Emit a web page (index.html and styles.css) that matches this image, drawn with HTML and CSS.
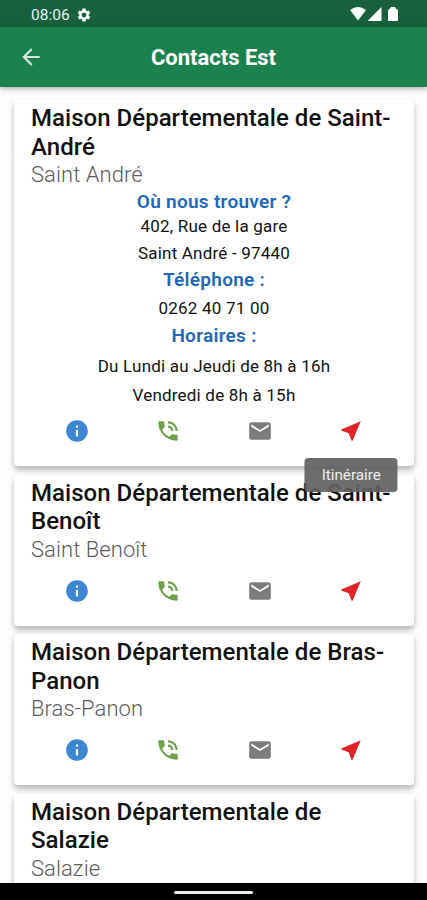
FILE: index.html
```html
<!DOCTYPE html>
<html lang="fr">
<head>
    <meta charset="UTF-8">
    <meta name="viewport" content="width=device-width, initial-scale=1.0">
    <title>Contacts Est</title>
    <link rel="stylesheet" href="styles.css">
</head>
<body>
    <!-- Icônes communes -->
    <svg class="sprite" width="0" height="0">
        <symbol id="info" viewBox="0 0 24 24"><path d="M12 2C6.48 2 2 6.48 2 12s4.48 10 10 10 10-4.48 10-10S17.52 2 12 2zm1 15h-2v-6h2v6zm0-8h-2V7h2v2z"/></symbol>
        <symbol id="phone" viewBox="0 0 24 24"><path d="M20 15.5c-1.25 0-2.45-.2-3.57-.57-.1-.03-.21-.05-.31-.05-.26 0-.51.1-.71.29l-2.2 2.2c-2.83-1.44-5.15-3.75-6.59-6.58l2.2-2.21c.28-.27.36-.66.25-1.01C8.7 6.45 8.5 5.25 8.5 4c0-.55-.45-1-1-1H4c-.55 0-1 .45-1 1 0 9.39 7.61 17 17 17 .55 0 1-.45 1-1v-3.5c0-.55-.45-1-1-1zM19 12h2c0-4.97-4.03-9-9-9v2c3.87 0 7 3.13 7 7zm-4 0h2c0-2.76-2.24-5-5-5v2c1.66 0 3 1.34 3 3z"/></symbol>
        <symbol id="mail" viewBox="0 0 24 24"><path d="M20 4H4c-1.1 0-1.99.9-1.99 2L2 18c0 1.1.9 2 2 2h16c1.1 0 2-.9 2-2V6c0-1.1-.9-2-2-2zm0 4l-8 5-8-5V6l8 5 8-5v2z"/></symbol>
        <symbol id="near" viewBox="0 0 24 24"><path d="M21 3L3 10.53v.98l6.84 2.65L12.48 21h.98L21 3z"/></symbol>
    </svg>

    <div class="screen">
        <header class="status-bar">
            <span class="time">08:06</span>
            <svg class="gear" viewBox="0 0 24 24"><path d="M19.14 12.94c.04-.3.06-.61.06-.94 0-.32-.02-.64-.07-.94l2.03-1.58c.18-.14.23-.41.12-.61l-1.92-3.32c-.12-.22-.37-.29-.59-.22l-2.39.96c-.5-.38-1.03-.7-1.62-.94l-.36-2.54c-.04-.24-.24-.41-.48-.41h-3.84c-.24 0-.43.17-.47.41l-.36 2.54c-.59.24-1.13.57-1.62.94l-2.39-.96c-.22-.08-.47 0-.59.22L2.74 8.87c-.12.21-.08.47.12.61l2.03 1.58c-.05.3-.09.63-.09.94s.02.64.07.94l-2.03 1.58c-.18.14-.23.41-.12.61l1.92 3.32c.12.22.37.29.59.22l2.39-.96c.5.38 1.03.7 1.62.94l.36 2.54c.05.24.24.41.48.41h3.84c.24 0 .44-.17.47-.41l.36-2.54c.59-.24 1.13-.56 1.62-.94l2.39.96c.22.08.47 0 .59-.22l1.92-3.32c.12-.22.07-.47-.12-.61l-2.01-1.58zM12 15.6c-1.98 0-3.6-1.62-3.6-3.6s1.62-3.6 3.6-3.6 3.6 1.62 3.6 3.6-1.62 3.6-3.6 3.6z"/></svg>
            <svg class="signals" viewBox="0 0 50 16">
                <path d="M0 4Q8-2 16 4L8 14.500zM17.500 15L31.500 1v14zM38 5q0-2 2-2.300L41 1h4l1 1.700q2 .3 2 2.300V14q0 1-1 1h-8q-1 0-1-1z"/>
            </svg>
        </header>

        <nav class="app-bar">
            <svg class="back" viewBox="0 0 24 24"><path d="M20 11H7.83l5.59-5.59L12 4l-8 8 8 8 1.41-1.41L7.83 13H20v-2z"/></svg>
            <h1>Contacts Est</h1>
        </nav>

        <main class="list">
            <section class="card">
                <h2>Maison Départementale de Saint-<br>André</h2>
                <p class="city">Saint André</p>
                <div class="details">
                    <h3>Où nous trouver ?</h3>
                    <p class="address">402, Rue de la gare<br>Saint André - 97440</p>
                    <h3>Téléphone :</h3>
                    <p class="number">0262 40 71 00</p>
                    <h3>Horaires :</h3>
                    <p class="hours">Du Lundi au Jeudi de 8h à 16h<br>Vendredi de 8h à 15h</p>
                </div>
                <div class="actions">
                    <svg class="info"><use href="#info"/></svg>
                    <svg class="phone"><use href="#phone"/></svg>
                    <svg class="mail"><use href="#mail"/></svg>
                    <div class="route">
                        <svg class="near"><use href="#near"/></svg>
                        <span class="tooltip">Itinéraire</span>
                    </div>
                </div>
            </section>

            <section class="card">
                <h2>Maison Départementale de Saint-<br>Benoît</h2>
                <p class="city">Saint Benoît</p>
                <div class="actions">
                    <svg class="info"><use href="#info"/></svg>
                    <svg class="phone"><use href="#phone"/></svg>
                    <svg class="mail"><use href="#mail"/></svg>
                    <svg class="near"><use href="#near"/></svg>
                </div>
            </section>

            <section class="card">
                <h2>Maison Départementale de Bras-<br>Panon</h2>
                <p class="city">Bras-Panon</p>
                <div class="actions">
                    <svg class="info"><use href="#info"/></svg>
                    <svg class="phone"><use href="#phone"/></svg>
                    <svg class="mail"><use href="#mail"/></svg>
                    <svg class="near"><use href="#near"/></svg>
                </div>
            </section>

            <section class="card">
                <h2>Maison Départementale de<br>Salazie</h2>
                <p class="city">Salazie</p>
                <div class="actions">
                    <svg class="info"><use href="#info"/></svg>
                    <svg class="phone"><use href="#phone"/></svg>
                    <svg class="mail"><use href="#mail"/></svg>
                    <svg class="near"><use href="#near"/></svg>
                </div>
            </section>
        </main>

        <footer class="system-nav"><span class="handle"></span></footer>
    </div>
</body>
</html>
```
FILE: styles.css
```css
* {
    box-sizing: border-box;
    margin: 0;
    padding: 0;
}

body {
    font-family: Roboto, "Liberation Sans", sans-serif;
    background: #fdfdfd;
    color: #111;
}

.sprite {
    display: none;
}

.screen {
    display: flex;
    flex-direction: column;
    height: 900px;
    overflow: hidden;
}

/* Barre d'état */
.status-bar {
    flex: none;
    display: flex;
    align-items: center;
    height: 27px;
    padding: 2px 27px 0 31px;
    background: #17603d;
    color: #e6efe9;
}

.time {
    font-size: 15.5px;
}

.gear {
    width: 16px;
    height: 16px;
    margin-left: 6px;
    fill: #fff;
}

.signals {
    width: 50px;
    height: 16px;
    margin-left: auto;
    margin-top: -1px;
    fill: #fff;
}

.app-bar {
    flex: none;
    position: relative;
    z-index: 1;
    display: grid;
    grid-template-columns: 44px 1fr 44px;
    align-items: center;
    height: 60px;
    padding-top: 1px;
    background: #1b814f;
    color: #fff;
    box-shadow: 0 2px 5px rgba(0, 0, 0, 0.3);
}

.back {
    width: 26px;
    height: 26px;
    margin: -2px 0 0 18px;
    fill: #d5e6dc;
}

h1 {
    font-size: 22px;
    font-weight: 700;
    text-align: center;
}

/* Liste des contacts */
.list {
    flex: 1;
    min-height: 0;
    display: flex;
    flex-direction: column;
    gap: 8.5px;
    padding: 13px 13px 0 14px;
    overflow: hidden;
}

.card {
    flex: none;
    height: 151px;
    padding: 4px 17px 0;
    border-radius: 4px;
    background: #fff;
    box-shadow: 0 4px 5px rgba(0, 0, 0, 0.2), 0 3px 8px rgba(0, 0, 0, 0.1);
}

.card:first-child {
    position: relative;
    z-index: 1;
    height: 366px;
}

h2 {
    font-size: 24px;
    font-weight: 500;
    line-height: 28.5px;
    letter-spacing: 0.03px;
    white-space: nowrap;
}

.city {
    font-size: 22px;
    font-weight: 300;
    line-height: 27px;
    letter-spacing: 0.07px;
    color: #5c5c5c;
}

.details {
    text-align: center;
}

h3 {
    font-size: 19px;
    font-weight: 600;
    line-height: 28px;
    letter-spacing: 0.28px;
    color: #2067b5;
}

.details p {
    font-size: 17px;
    letter-spacing: 0.2px;
}

.details .address {
    line-height: 27px;
    margin: -3px 0 -1px;
}

.details .number {
    line-height: 28px;
}

.details .hours {
    line-height: 29px;
    margin-top: 2px;
}

.actions {
    display: grid;
    grid-template-columns: repeat(4, 1fr);
    justify-items: center;
    margin-top: 15px;
}

.details + .actions {
    margin-top: 8px;
}

.actions svg {
    display: block;
    width: 26px;
    height: 26px;
}

.info {
    fill: #3b87d3;
}

.phone {
    fill: #6fa34b;
}

.mail {
    fill: #7c7c7c;
}

.near {
    fill: #de2329;
}

.route {
    position: relative;
}

.tooltip {
    position: absolute;
    top: 40px;
    left: 50%;
    transform: translateX(-50%);
    padding: 0 17px;
    border-radius: 4px;
    background: rgba(97, 97, 97, 0.92);
    color: #eee;
    font-size: 15.2px;
    line-height: 34px;
}

/* Barre de navigation système */
.system-nav {
    flex: none;
    display: flex;
    justify-content: center;
    align-items: center;
    height: 17px;
    background: #000;
}

.handle {
    width: 79px;
    height: 3px;
    margin-top: 1px;
    border-radius: 2px;
    background: #eee;
}
```
